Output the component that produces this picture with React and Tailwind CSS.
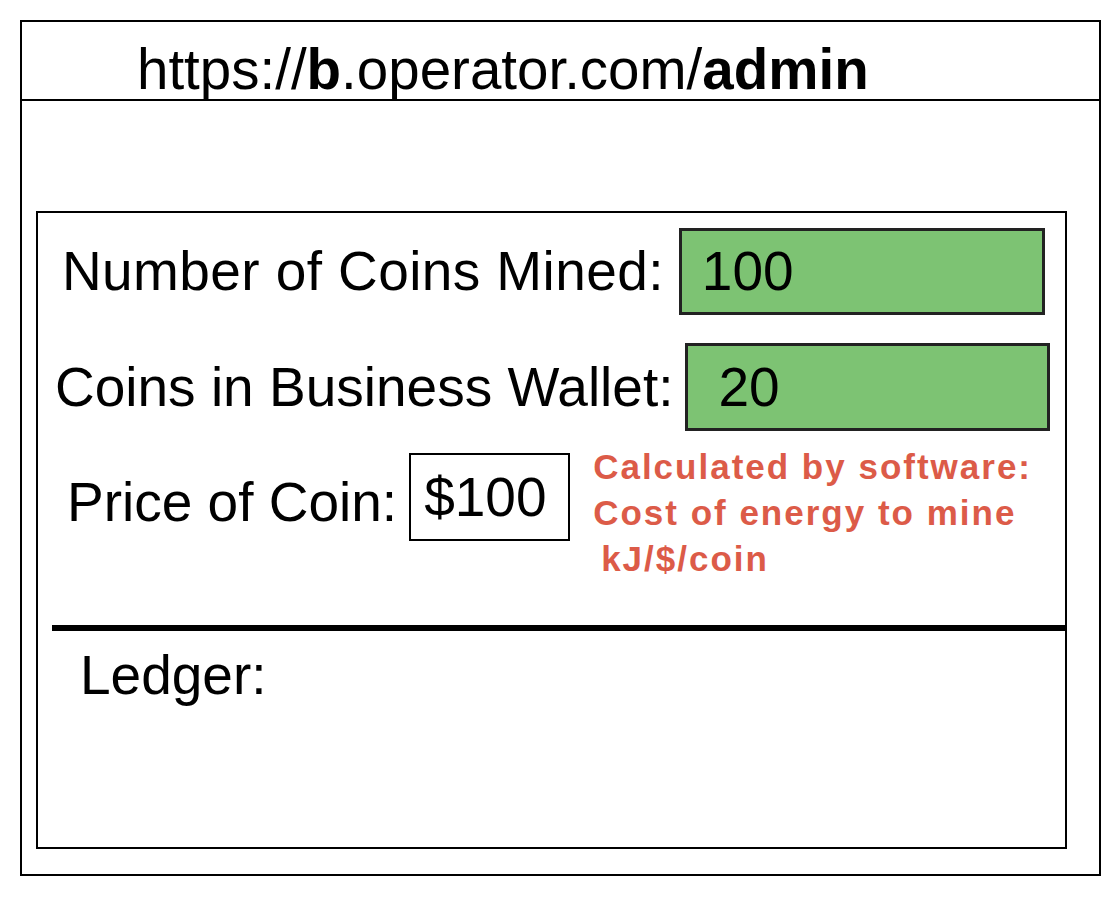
export default function App() {
  return (
    <div className="min-h-[900px] bg-white pt-[20px] pl-[20px] font-['Liberation_Sans',Arial,sans-serif] text-black">
      <div className="w-[1081px] h-[856px] border-2 border-black flex flex-col">
        {/* Address bar */}
        <div className="h-[79px] border-b-2 border-black pl-[115px] pt-[20px] text-[56.5px] leading-none whitespace-nowrap">
          https://<b>b</b>.operator.com/<b>admin</b>
        </div>

        {/* Admin panel */}
        <div className="ml-[14px] mt-[110px] w-[1031px] h-[638px] border-2 border-black flex flex-col text-[55px] leading-none">
          <div className="mt-[15px] pl-[24px] flex items-center gap-[15px]">
            <span className="tracking-[0.4px]">Number of Coins Mined:</span>
            <div className="w-[366px] h-[87px] border-[3px] border-[#222] bg-[#7dc373] flex items-center pl-[20px]">100</div>
          </div>

          <div className="mt-[28px] pl-[17px] flex items-center gap-[12px]">
            <span>Coins in Business Wallet:</span>
            <div className="w-[365px] h-[88px] border-[3px] border-[#222] bg-[#7dc373] flex items-center pl-[30px]">20</div>
          </div>

          <div className="mt-[13px] pl-[29px] flex items-start">
            <span className="mt-[31px]">Price of Coin:</span>
            <div className="ml-[12px] mt-[9px] w-[161px] h-[88px] border-2 border-black flex items-center pl-[13px]">$100</div>
            <div className="ml-[23px] text-[35px] leading-[46px] font-bold tracking-[2px] text-[#dc5b48] whitespace-nowrap">
              <div>Calculated by software:</div>
              <div>Cost of energy to mine</div>
              <div className="pl-[8px]">kJ/$/coin</div>
            </div>
          </div>

          <div className="mt-[43px] ml-[14px] h-[6px] bg-black" />

          <div className="pl-[42px] mt-[17px]">Ledger:</div>
        </div>
      </div>
    </div>
  );
}
